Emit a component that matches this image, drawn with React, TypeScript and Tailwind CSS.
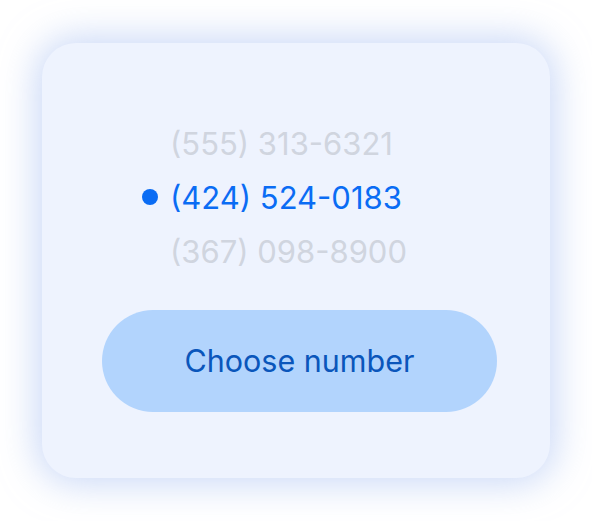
const numbers = [
  { value: "(555) 313-6321", active: false },
  { value: "(424) 524-0183", active: true },
  { value: "(367) 098-8900", active: false },
];

export default function App() {
  return (
    <div className="flex h-[521px] w-[592px] items-center justify-center bg-white font-['Inter','Open_Sans',sans-serif]">
      <div className="flex h-[435px] w-[508px] flex-col rounded-[34px] bg-[#eef3fe] pt-[73px] pb-[66px] shadow-[0_0_36px_6px_rgba(160,186,240,0.55)]">
        <ul className="flex flex-col pl-[100px]">
          {numbers.map((n) => (
            <li key={n.value} className="flex h-[54px] items-center">
              <span
                className={
                  n.active
                    ? "mr-[12px] h-[16px] w-[16px] rounded-full bg-[#0a6cf4]"
                    : "mr-[12px] h-[16px] w-[16px]"
                }
              />
              <span
                className={
                  n.active
                    ? "text-[31px] leading-none text-[#0a6cf4]"
                    : "text-[31px] leading-none text-[#d0d5df]"
                }
              >
                {n.value}
              </span>
            </li>
          ))}
        </ul>
        <button
          type="button"
          className="mt-[32px] ml-[60px] flex h-[102px] w-[395px] items-center justify-center rounded-full bg-[#b2d4fd] text-[30.5px] text-[#0a56bb]"
        >
          Choose number
        </button>
      </div>
    </div>
  );
}
